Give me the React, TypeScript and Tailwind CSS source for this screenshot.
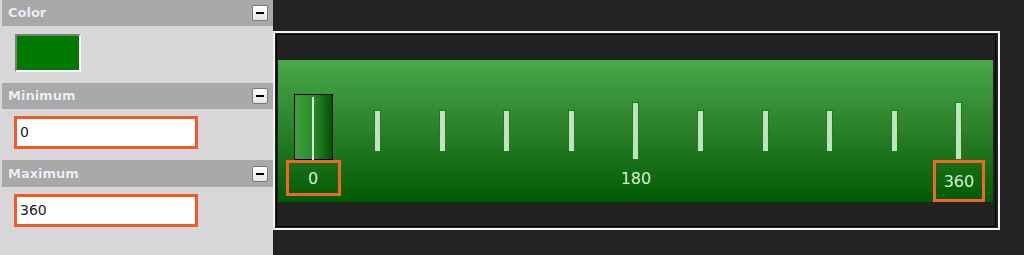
import React from "react";

const font = { fontFamily: '"DejaVu Sans", Verdana, sans-serif' };

const MinusButton = () => (
  <div className="mr-[5px] flex h-[16px] w-[16px] items-center justify-center rounded-[2px] border border-[#7a7a7a] bg-linear-to-b from-white to-[#e4e4e4]">
    <div className="h-[2px] w-[8px] bg-black" />
  </div>
);

const SectionHeader = ({ title, h }: { title: string; h: string }) => (
  <div className={`ml-[2px] flex ${h} items-center justify-between bg-[#a9a9a9]`}>
    <span className="pl-[6px] text-[13px] font-bold text-[#eeeef6] [text-shadow:0_0_1px_#8a90a8]">
      {title}
    </span>
    <MinusButton />
  </div>
);

const ValueInput = ({ value }: { value: string }) => (
  <div className="ml-[14px] flex h-[33px] w-[184px] items-center border-[3px] border-[#f05a24] bg-white pl-[3px] text-[14px] text-[#222]">
    {value}
  </div>
);

const ticks = [0, 1, 2, 3, 4, 5, 6, 7, 8, 9, 10];

const Tick = ({ big }: { big: boolean }) => (
  <div
    className={`w-[7px] border border-[#1d7a1d] bg-[#bfe3bf] ${big ? "h-[58px]" : "h-[42px]"}`}
  />
);

const Label = ({ text, boxed, tall }: { text: string; boxed: boolean; tall?: boolean }) => (
  <div
    className={`flex ${tall ? "h-[42px] w-[52px]" : "h-[36px] w-[55px]"} shrink-0 items-center justify-center border-[3px] pt-[2px] text-[16px] text-[#d4eed0] ${
      boxed ? "border-[#f26526]" : "border-transparent"
    }`}
  >
    {text}
  </div>
);

export default function App() {
  return (
    <div className="flex h-[255px] w-[1024px] overflow-hidden bg-[#232323]" style={font}>
      {/* Left – property panel */}
      <div className="flex w-[273px] shrink-0 flex-col bg-[#d8d6d9]">
        <SectionHeader title="Color" h="h-[26px]" />
        <div className="ml-[15px] mt-[8px] h-[38px] w-[66px] border-2 border-t-[#7c7c7c] border-l-[#7c7c7c] border-r-white border-b-white bg-[#007a00]" />
        <div className="mt-[11px]">
          <SectionHeader title="Minimum" h="h-[26px]" />
        </div>
        <div className="mt-[7px]">
          <ValueInput value="0" />
        </div>
        <div className="mt-[11px]">
          <SectionHeader title="Maximum" h="h-[27px]" />
        </div>
        <div className="mt-[7px]">
          <ValueInput value="360" />
        </div>
      </div>

      {/* Right – slider preview */}
      <div className="flex-1">
        <div className="mt-[31px] h-[199px] w-[727px] border-2 border-[#f4f4f4]">
          <div className="m-px flex h-[193px] w-[720px] flex-col border border-black bg-[#222222]">
            <div className="h-[25px]" />
            <div className="ml-px flex h-[142px] w-[715px] justify-between bg-linear-to-b from-[#4aa84a] to-[#005a00] pl-[35px] pr-[34px]">
              {ticks.map((i) => {
                if (i === 0) {
                  return (
                    <div key={i} className="flex w-0 flex-col items-center pt-[34px]">
                      <div className="flex h-[66px] w-[39px] shrink-0 justify-center border border-black bg-linear-to-r from-[#3f9f3f] via-[#2a8a2a] to-[#005500]">
                        <div className="mt-[2px] h-[64px] w-[2px] bg-[#d8ecd8]" />
                      </div>
                      <Label text="0" boxed />
                    </div>
                  );
                }
                const big = i === 5 || i === 10;
                return (
                  <div key={i} className="flex w-0 flex-col items-center pt-[42px]">
                    <div className="flex h-[58px] shrink-0 items-center">
                      <Tick big={big} />
                    </div>
                    {i === 5 && <Label text="180" boxed={false} />}
                    {i === 10 && <Label text="360" boxed tall />}
                  </div>
                );
              })}
            </div>
            <div className="flex-1" />
          </div>
        </div>
      </div>
    </div>
  );
}
